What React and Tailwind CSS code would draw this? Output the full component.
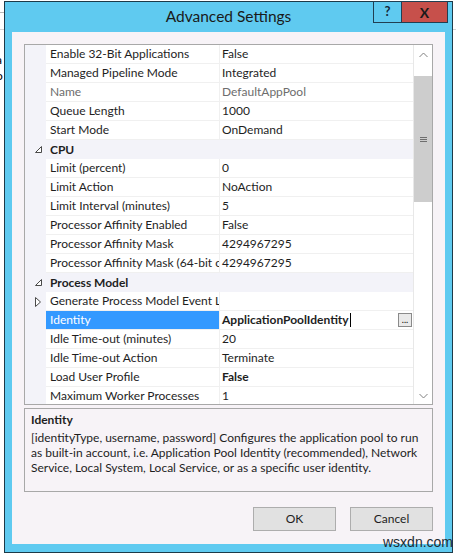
import React from 'react'

// Rows of the property grid, top to bottom
const rows = [
  { name: 'Enable 32-Bit Applications', value: 'False' },
  { name: 'Managed Pipeline Mode', value: 'Integrated' },
  { name: 'Name', value: 'DefaultAppPool', disabled: true },
  { name: 'Queue Length', value: '1000' },
  { name: 'Start Mode', value: 'OnDemand' },
  { category: 'CPU' },
  { name: 'Limit (percent)', value: '0' },
  { name: 'Limit Action', value: 'NoAction' },
  { name: 'Limit Interval (minutes)', value: '5' },
  { name: 'Processor Affinity Enabled', value: 'False' },
  { name: 'Processor Affinity Mask', value: '4294967295' },
  { name: 'Processor Affinity Mask (64-bit option)', value: '4294967295' },
  { category: 'Process Model' },
  { name: 'Generate Process Model Event Log Entry', value: '', collapsed: true },
  { name: 'Identity', value: 'ApplicationPoolIdentity', selected: true, bold: true },
  { name: 'Idle Time-out (minutes)', value: '20' },
  { name: 'Idle Time-out Action', value: 'Terminate' },
  { name: 'Load User Profile', value: 'False', bold: true },
  { name: 'Maximum Worker Processes', value: '1' },
]

const CategoryGlyph = () => (
  <svg width="7" height="7" viewBox="0 0 7 7" className="block">
    <path d="M6.5 0.5 L6.5 6.5 L0.5 6.5 Z" fill="#fff" stroke="#4a4a4a" strokeWidth="1" />
  </svg>
)

const CollapsedGlyph = () => (
  <svg width="6" height="10" viewBox="0 0 6 10" className="block">
    <path d="M0.5 0.5 L5.5 5 L0.5 9.5 Z" fill="#fff" stroke="#4a4a4a" strokeWidth="1" />
  </svg>
)

const GridRow = ({ row }) => {
  if (row.category) {
    return (
      <div className="flex h-[19px] shrink-0 items-center bg-[#f3f3f9]">
        <div className="flex w-[21px] shrink-0 justify-end pr-[4px]">
          <CategoryGlyph />
        </div>
        <span className="pl-[4px] font-bold text-[#1e1e1e]">{row.category}</span>
      </div>
    )
  }

  return (
    <div className="flex h-[19px] shrink-0">
      {/* gutter */}
      <div className="flex w-[21px] shrink-0 items-center justify-end bg-[#f3f3f9] pr-[5px]">
        {row.collapsed && <CollapsedGlyph />}
      </div>
      {/* name */}
      <div
        className={`flex w-[174px] shrink-0 items-center overflow-hidden whitespace-nowrap border-b border-r border-[#f0f0f0] pl-[4px] ${
          row.selected ? 'bg-[#3399ff] text-white' : row.disabled ? 'bg-white text-[#6d6d6d]' : 'bg-white text-[#1e1e1e]'
        }`}
      >
        {row.name}
      </div>
      {/* value */}
      <div
        className={`flex min-w-0 flex-1 items-center overflow-hidden whitespace-nowrap border-b border-[#f0f0f0] bg-white pl-[2px] ${
          row.disabled ? 'text-[#6d6d6d]' : 'text-[#1e1e1e]'
        } ${row.bold ? 'font-bold' : ''}`}
      >
        <span>{row.value}</span>
        {row.selected && (
          <>
            <span className="ml-[1px] h-[14px] w-px bg-black" />
            <span className="ml-auto mr-[1px] flex h-[14px] w-[14px] items-end justify-center border border-[#8a8a8a] bg-[#e9e9e9] pb-[2px] text-[9px] leading-none font-normal text-black">
              ...
            </span>
          </>
        )}
      </div>
    </div>
  )
}

const Scrollbar = () => (
  <div className="flex w-[19px] shrink-0 flex-col border-l border-[#e8e8e8] bg-[#f5f5f5]">
    <div className="flex h-[20px] items-center justify-center bg-white text-[#777]">
      <svg width="9" height="6" viewBox="0 0 9 6"><path d="M0.5 5 L4.5 1 L8.5 5" fill="none" stroke="#808080" /></svg>
    </div>
    <div className="h-[11px] bg-white" />
    <div className="flex h-[126px] items-center justify-center bg-[#cdcdcd]">
      <svg width="7" height="7" viewBox="0 0 7 7">
        <path d="M0 1.5 H7 M0 3.5 H7 M0 5.5 H7" stroke="#6e6e6e" strokeWidth="1" />
      </svg>
    </div>
    <div className="flex-1 bg-white" />
    <div className="flex h-[17px] items-center justify-center bg-white">
      <svg width="9" height="6" viewBox="0 0 9 6"><path d="M0.5 1 L4.5 5 L8.5 1" fill="none" stroke="#808080" /></svg>
    </div>
  </div>
)

export default function App() {
  return (
    <div className="relative h-[554px] w-[456px] overflow-hidden bg-white font-['Lato',sans-serif] text-[12px]">
      {/* bits of the page behind the dialog */}
      <div className="absolute left-0 top-[12px] h-px w-[5px] bg-[#b9b9b9]" />
      <div className="absolute left-0 top-[29px] h-px w-[456px] bg-[#d4d4d4]" />
      <div className="absolute left-[-4px] top-[54px] text-[12px] leading-none text-black">a</div>
      <div className="absolute left-[-4px] top-[70px] text-[12px] leading-none text-black">o</div>

      {/* dialog window */}
      <div className="relative ml-[4px] mt-[1px] flex h-[552px] w-[449px] flex-col border border-[#1d3a48] bg-[#5fcaf0]">
        {/* title bar */}
        <div className="relative flex h-[30px] shrink-0 items-center justify-center">
          <span className="text-[15.5px] text-[#1a1a1a]">Advanced Settings</span>
          <div className="absolute right-[4px] top-[-1px] flex">
            <div className="flex h-[22px] w-[29px] items-center justify-center border border-[#213f52] bg-[#5fcaf0] text-[13px] font-bold text-[#14283a]">
              ?
            </div>
            <div className="-ml-px flex h-[22px] w-[47px] items-center justify-center border border-[#213f52] bg-[#c7504b] text-[14px] font-bold text-[#1a1a1a]">
              X
            </div>
          </div>
        </div>

        {/* client area */}
        <div className="mx-[7px] flex flex-1 flex-col bg-[#f7f3f7] px-[12px] pt-[12px]">
          {/* property grid */}
          <div className="flex h-[361px] shrink-0 overflow-hidden border border-[#a8a8a8] bg-white leading-none">
            <div className="flex min-w-0 flex-1 flex-col">
              {rows.map((row, i) => (
                <GridRow key={i} row={row} />
              ))}
            </div>
            <Scrollbar />
          </div>

          {/* description panel */}
          <div className="mt-[3px] h-[84px] shrink-0 border border-[#a8a8a8] px-[6px] pt-[3px] text-[#1e1e1e]">
            <div className="font-bold leading-[15px]">Identity</div>
            <p className="mt-[3px] leading-[15px]">
              [identityType, username, password] Configures the application pool to run as built-in account, i.e.
              Application Pool Identity (recommended), Network Service, Local System, Local Service, or as a specific
              user identity.
            </p>
          </div>

          {/* buttons */}
          <div className="mt-[15px] flex justify-end gap-[14px]">
            <button className="h-[24px] w-[83px] border border-[#adadad] bg-[#e1e1e1] text-[#1e1e1e]">OK</button>
            <button className="h-[24px] w-[83px] border border-[#adadad] bg-[#e1e1e1] text-[#1e1e1e]">Cancel</button>
          </div>
        </div>
        <div className="h-[8px] shrink-0" />
      </div>

      {/* watermark */}
      <div className="absolute left-[383px] top-[535px] font-['Liberation_Sans',sans-serif] text-[14px] leading-none text-[#1e2b33]">
        wsxdn.com
      </div>
    </div>
  )
}
